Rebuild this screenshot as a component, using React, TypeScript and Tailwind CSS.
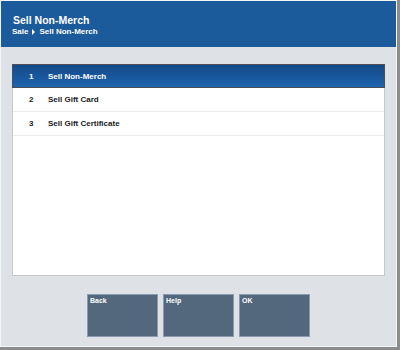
const items = [
  { n: '1', label: 'Sell Non-Merch' },
  { n: '2', label: 'Sell Gift Card' },
  { n: '3', label: 'Sell Gift Certificate' },
];

const buttons = ['Back', 'Help', 'OK'];

export default function App() {
  const selected = 0;

  return (
    <div
      className="w-[400px] h-[350px] bg-[#8c8c8c] pr-[3px] pb-[3px]"
      style={{ fontFamily: '"Liberation Sans", Arial, sans-serif' }}
    >
      <div className="w-[397px] h-[347px] border border-[#f4f5f7] bg-[#dee1e6] flex flex-col">
        {/* header */}
        <div className="h-[46px] bg-[#1b5a9b] text-white pl-[11px] pt-[13px] shrink-0">
          <div className="text-[10.5px] font-bold leading-[12px] pl-px">Sell Non-Merch</div>
          <div className="flex items-center text-[8px] font-bold leading-[10px] mt-[1px]">
            <span>Sale</span>
            <span className="mx-[4px] w-0 h-0 border-y-[3px] border-y-transparent border-l-[3px] border-l-white"></span>
            <span>Sell Non-Merch</span>
          </div>
        </div>

        {/* list */}
        <div className="mx-[11px] mt-[17px] h-[212px] bg-white border border-[#c4c8ce]">
          {items.map((it, i) => (
            <div
              key={it.n}
              className={
                i === selected
                  ? 'h-[24px] -m-px mb-0 flex items-center pt-px text-white border border-[#4a4f56] bg-gradient-to-b from-[#134a88] to-[#1e63ae]'
                  : 'h-[24px] flex items-center pt-px text-[#1a1a1a] border-b border-[#ececec]'
              }
            >
              <span className="w-[35px] pl-[16px] text-[8px] font-bold">{it.n}</span>
              <span className="text-[8px] font-bold">{it.label}</span>
            </div>
          ))}
        </div>

        {/* buttons */}
        <div className="flex justify-center gap-[5px] mt-[18px]">
          {buttons.map((b) => (
            <div
              key={b}
              className="w-[71px] h-[43px] bg-[#53677d] border border-[#8a9bb0] text-white text-[7px] font-bold leading-[9px] pl-[2px] pt-[1px]"
            >
              {b}
            </div>
          ))}
        </div>
      </div>
    </div>
  );
}
